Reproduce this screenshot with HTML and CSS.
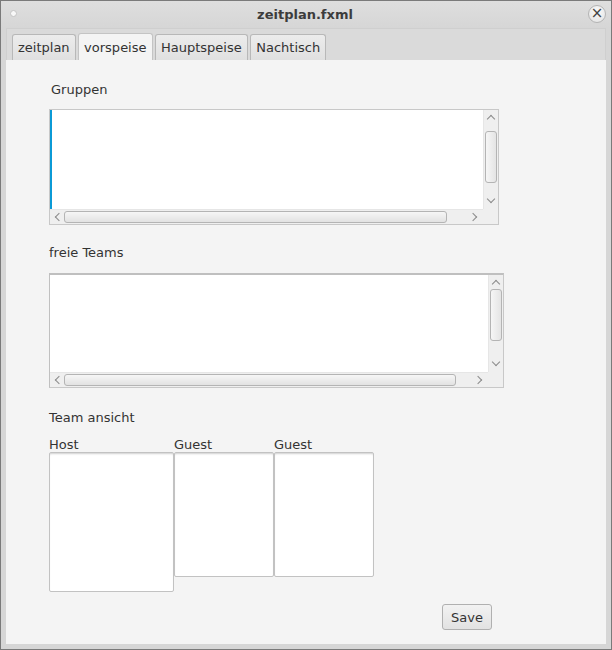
FILE: index.html
```html
<!DOCTYPE html>
<html>
<head>
<meta charset="utf-8">
<link rel="stylesheet" href="styles.css">
</head>
<body>
<div class="window">
  <div class="titlebar">
    <span class="dot"></span>
    <span class="title">zeitplan.fxml</span>
    <span class="close">×</span>
  </div>
  <div class="frame">
    <div class="tabs">
      <div class="tab">zeitplan</div>
      <div class="tab active">vorspeise</div>
      <div class="tab">Hauptspeise</div>
      <div class="tab">Nachtisch</div>
    </div>
    <div class="content">
      <div class="label first">Gruppen</div>
      <div class="list list1 focused">
        <div class="list-body"></div>
        <div class="vbar">
          <span class="arrow up"></span>
          <span class="vthumb"></span>
          <span class="arrow down"></span>
        </div>
        <div class="hbar">
          <span class="arrow left"></span>
          <span class="hthumb"></span>
          <span class="arrow right"></span>
        </div>
        <div class="corner"></div>
      </div>

      <div class="label second">freie Teams</div>
      <div class="list list2">
        <div class="list-body"></div>
        <div class="vbar">
          <span class="arrow up"></span>
          <span class="vthumb"></span>
          <span class="arrow down"></span>
        </div>
        <div class="hbar">
          <span class="arrow left"></span>
          <span class="hthumb"></span>
          <span class="arrow right"></span>
        </div>
        <div class="corner"></div>
      </div>

      <div class="label third">Team ansicht</div>
      <div class="teams">
        <div class="team host">
          <div class="team-label">Host</div>
          <div class="team-box"></div>
        </div>
        <div class="team guest">
          <div class="team-label">Guest</div>
          <div class="team-box"></div>
        </div>
        <div class="team guest">
          <div class="team-label">Guest</div>
          <div class="team-box"></div>
        </div>
      </div>
      <div class="footer">
        <button class="save">Save</button>
      </div>
    </div>
  </div>
</div>
</body>
</html>
```

FILE: styles.css
```css
* { box-sizing: border-box; }
html, body { margin: 0; padding: 0; background: #d6d6d6; }
body { font-family: "DejaVu Sans", sans-serif; font-size: 13px; color: #333; }

.window {
  width: 612px; height: 650px;
  border: 1px solid #7a7a7a;
  background: #d6d6d6;
  display: flex; flex-direction: column;
}
.titlebar {
  height: 27px;
  position: relative;
  display: flex; align-items: center; justify-content: center;
  background: linear-gradient(#dedede, #d6d6d6);
}
.title { font-weight: bold; font-size: 13px; color: #3c3c3c; margin-left: -2px; }
.dot {
  position: absolute; left: 9px; top: 9px;
  width: 7px; height: 7px; border-radius: 50%;
  background: #f8f8f8; border: 1px solid #c4c4c4;
}
.close {
  position: absolute; right: 5px; top: 4px;
  width: 18px; height: 18px; border-radius: 50%;
  background: radial-gradient(circle at 50% 35%, #fafafa, #e2e2e2);
  border: 1px solid #b4b4b4;
  font-size: 15px; line-height: 15px; text-align: center; color: #444;
}
.frame {
  flex: 1;
  padding: 0 5px 5px 5px;
  display: flex; flex-direction: column;
}
.tabs {
  height: 32px;
  background: #dadada;
  border: 1px solid #cfcfcf;
  border-bottom: none;
  display: flex; align-items: flex-end;
  padding-left: 5px; gap: 2.5px;
}
.tab {
  height: 26px;
  padding: 0 5px;
  border: 1px solid #b8b8b8; border-bottom: none;
  border-radius: 3px 3px 0 0;
  background: linear-gradient(#ececec, #e0e0e0);
  display: flex; align-items: center;
  color: #333;
}
.tab.active { height: 27px; background: #f4f4f4; border-color: #c4c4c4; }

.content {
  flex: 1;
  background: #f4f4f4;
  padding: 22px 0 0 43px;
}
.label { line-height: 16px; height: 16px; }
.label.first { margin-left: 2px; }
.label.second { margin-top: 20px; }
.label.third { margin-top: 22px; }

.list {
  margin-top: 11px;
  border: 1px solid #c8c8c8;
  background: #fff;
  display: grid;
  grid-template-columns: 1fr 15px;
  grid-template-rows: 1fr 15px;
}
.list1 { width: 450px; height: 116px; }
.list2 { width: 455px; height: 115px; margin-top: 12px; border-top: 2px solid #bfbfbf; border-left-color: #c0c0c0; }
.list-body { background: #fff; }
.list1.focused .list-body { border-left: 2px solid #0b9ad6; }

.vbar, .hbar, .corner { background: #efefef; position: relative; }
.vbar { border-left: 1px solid #e6e6e6; }
.hbar { border-top: 1px solid #e6e6e6; }
.vthumb {
  position: absolute; left: 1px; width: 12px;
  border: 1px solid #b4b4b4; border-radius: 3px;
  background: linear-gradient(90deg, #f6f6f6, #e4e4e4);
}
.list1 .vthumb { top: 21px; height: 52px; }
.list2 .vthumb { top: 14px; height: 52px; }
.hthumb {
  position: absolute; top: 1px; height: 12px;
  border: 1px solid #b4b4b4; border-radius: 3px;
  background: linear-gradient(#f6f6f6, #e2e2e2);
  left: 14px;
}
.list1 .hthumb { width: 383px; }
.list2 .hthumb { width: 392px; }

.arrow {
  position: absolute; width: 6px; height: 6px;
  border-left: 1px solid #8a8a8a; border-top: 1px solid #8a8a8a;
}
.arrow.up { left: 4px; top: 6px; transform: rotate(45deg); }
.arrow.down { left: 4px; bottom: 7px; transform: rotate(225deg); }
.arrow.left { left: 6px; top: 4px; transform: rotate(-45deg); }
.arrow.right { right: 7px; top: 4px; transform: rotate(135deg); }

.teams { display: flex; align-items: flex-start; margin-top: 11px; }
.team { display: flex; flex-direction: column; }
.team-label { line-height: 16px; height: 15px; }
.team-box {
  background: #fff;
  border: 1px solid #c2c2c2;
  border-radius: 2px;
  box-shadow: inset 0 2px 2px -1px #d0d0d0;
}
.host .team-box { width: 125px; height: 140px; }
.guest .team-box { width: 100px; height: 125px; }

.footer { width: 443px; display: flex; justify-content: flex-end; margin-top: 12px; }
.save {
  width: 50px; height: 26px;
  font-family: "DejaVu Sans", sans-serif; font-size: 13px; color: #333;
  border: 1px solid #b0b0b0; border-radius: 3px;
  background: linear-gradient(#f2f2f2, #e2e2e2);
  padding: 0;
}
```
